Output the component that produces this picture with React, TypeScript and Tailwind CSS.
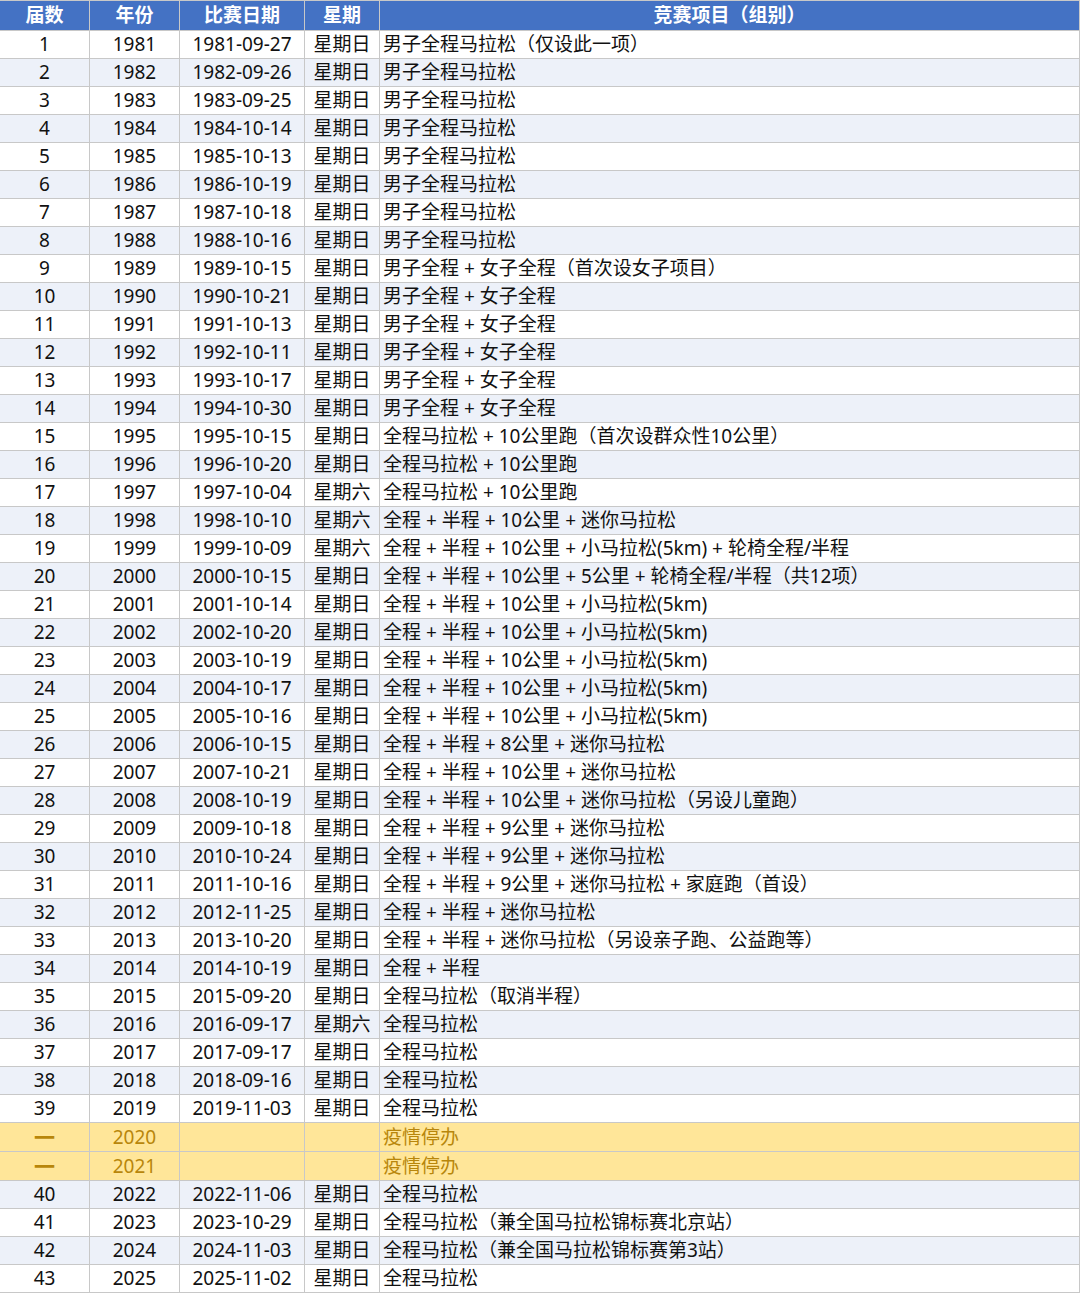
import * as React from 'react';

type Row = {
  no: string;
  year: string;
  date: string;
  week: string;
  event: string;
  halted?: boolean;
};

const rows: Row[] = [
  { no: '1', year: '1981', date: '1981-09-27', week: '星期日', event: '男子全程马拉松（仅设此一项）' },
  { no: '2', year: '1982', date: '1982-09-26', week: '星期日', event: '男子全程马拉松' },
  { no: '3', year: '1983', date: '1983-09-25', week: '星期日', event: '男子全程马拉松' },
  { no: '4', year: '1984', date: '1984-10-14', week: '星期日', event: '男子全程马拉松' },
  { no: '5', year: '1985', date: '1985-10-13', week: '星期日', event: '男子全程马拉松' },
  { no: '6', year: '1986', date: '1986-10-19', week: '星期日', event: '男子全程马拉松' },
  { no: '7', year: '1987', date: '1987-10-18', week: '星期日', event: '男子全程马拉松' },
  { no: '8', year: '1988', date: '1988-10-16', week: '星期日', event: '男子全程马拉松' },
  { no: '9', year: '1989', date: '1989-10-15', week: '星期日', event: '男子全程 + 女子全程（首次设女子项目）' },
  { no: '10', year: '1990', date: '1990-10-21', week: '星期日', event: '男子全程 + 女子全程' },
  { no: '11', year: '1991', date: '1991-10-13', week: '星期日', event: '男子全程 + 女子全程' },
  { no: '12', year: '1992', date: '1992-10-11', week: '星期日', event: '男子全程 + 女子全程' },
  { no: '13', year: '1993', date: '1993-10-17', week: '星期日', event: '男子全程 + 女子全程' },
  { no: '14', year: '1994', date: '1994-10-30', week: '星期日', event: '男子全程 + 女子全程' },
  { no: '15', year: '1995', date: '1995-10-15', week: '星期日', event: '全程马拉松 + 10公里跑（首次设群众性10公里）' },
  { no: '16', year: '1996', date: '1996-10-20', week: '星期日', event: '全程马拉松 + 10公里跑' },
  { no: '17', year: '1997', date: '1997-10-04', week: '星期六', event: '全程马拉松 + 10公里跑' },
  { no: '18', year: '1998', date: '1998-10-10', week: '星期六', event: '全程 + 半程 + 10公里 + 迷你马拉松' },
  { no: '19', year: '1999', date: '1999-10-09', week: '星期六', event: '全程 + 半程 + 10公里 + 小马拉松(5km) + 轮椅全程/半程' },
  { no: '20', year: '2000', date: '2000-10-15', week: '星期日', event: '全程 + 半程 + 10公里 + 5公里 + 轮椅全程/半程（共12项）' },
  { no: '21', year: '2001', date: '2001-10-14', week: '星期日', event: '全程 + 半程 + 10公里 + 小马拉松(5km)' },
  { no: '22', year: '2002', date: '2002-10-20', week: '星期日', event: '全程 + 半程 + 10公里 + 小马拉松(5km)' },
  { no: '23', year: '2003', date: '2003-10-19', week: '星期日', event: '全程 + 半程 + 10公里 + 小马拉松(5km)' },
  { no: '24', year: '2004', date: '2004-10-17', week: '星期日', event: '全程 + 半程 + 10公里 + 小马拉松(5km)' },
  { no: '25', year: '2005', date: '2005-10-16', week: '星期日', event: '全程 + 半程 + 10公里 + 小马拉松(5km)' },
  { no: '26', year: '2006', date: '2006-10-15', week: '星期日', event: '全程 + 半程 + 8公里 + 迷你马拉松' },
  { no: '27', year: '2007', date: '2007-10-21', week: '星期日', event: '全程 + 半程 + 10公里 + 迷你马拉松' },
  { no: '28', year: '2008', date: '2008-10-19', week: '星期日', event: '全程 + 半程 + 10公里 + 迷你马拉松（另设儿童跑）' },
  { no: '29', year: '2009', date: '2009-10-18', week: '星期日', event: '全程 + 半程 + 9公里 + 迷你马拉松' },
  { no: '30', year: '2010', date: '2010-10-24', week: '星期日', event: '全程 + 半程 + 9公里 + 迷你马拉松' },
  { no: '31', year: '2011', date: '2011-10-16', week: '星期日', event: '全程 + 半程 + 9公里 + 迷你马拉松 + 家庭跑（首设）' },
  { no: '32', year: '2012', date: '2012-11-25', week: '星期日', event: '全程 + 半程 + 迷你马拉松' },
  { no: '33', year: '2013', date: '2013-10-20', week: '星期日', event: '全程 + 半程 + 迷你马拉松（另设亲子跑、公益跑等）' },
  { no: '34', year: '2014', date: '2014-10-19', week: '星期日', event: '全程 + 半程' },
  { no: '35', year: '2015', date: '2015-09-20', week: '星期日', event: '全程马拉松（取消半程）' },
  { no: '36', year: '2016', date: '2016-09-17', week: '星期六', event: '全程马拉松' },
  { no: '37', year: '2017', date: '2017-09-17', week: '星期日', event: '全程马拉松' },
  { no: '38', year: '2018', date: '2018-09-16', week: '星期日', event: '全程马拉松' },
  { no: '39', year: '2019', date: '2019-11-03', week: '星期日', event: '全程马拉松' },
  { no: '一', year: '2020', date: '', week: '', event: '疫情停办', halted: true },
  { no: '一', year: '2021', date: '', week: '', event: '疫情停办', halted: true },
  { no: '40', year: '2022', date: '2022-11-06', week: '星期日', event: '全程马拉松' },
  { no: '41', year: '2023', date: '2023-10-29', week: '星期日', event: '全程马拉松（兼全国马拉松锦标赛北京站）' },
  { no: '42', year: '2024', date: '2024-11-03', week: '星期日', event: '全程马拉松（兼全国马拉松锦标赛第3站）' },
  { no: '43', year: '2025', date: '2025-11-02', week: '星期日', event: '全程马拉松' },
];

const cols = 'grid grid-cols-[90px_90px_125px_75px_1fr]';

export default function App() {
  return (
    <div className="w-[1080px] bg-white font-['Noto_Sans','Noto_Sans_CJK_SC',sans-serif] text-[19px] leading-none border-t border-r border-[#c8c8c8]">
      {/* header */}
      <div className={`${cols} h-[30px] bg-[#4472c4] text-white font-bold border-b border-[#c8c8c8]`}>
        {['届数', '年份', '比赛日期', '星期', '竞赛项目（组别）'].map((h, i) => (
          <div
            key={h}
            className={`flex items-center justify-center ${i < 4 ? 'border-r border-[#c8c8c8]' : ''}`}
          >
            {h}
          </div>
        ))}
      </div>

      {rows.map((r, idx) => {
        const bg = r.halted
          ? 'bg-[#ffe699] text-[#b8860b] h-[29px]'
          : idx % 2 === 1
            ? 'bg-[#edf1f9] text-[#111111] h-[28px]'
            : 'bg-white text-[#111111] h-[28px]';
        return (
          <div key={r.year} className={`${cols} ${bg} border-b border-[#c8c8c8]`}>
            <div
              className={`flex items-center justify-center border-r border-[#c8c8c8] ${r.halted ? 'font-bold text-[21px]' : ''}`}
            >
              {r.no}
            </div>
            <div className="flex items-center justify-center border-r border-[#c8c8c8]">{r.year}</div>
            <div className="flex items-center justify-center border-r border-[#c8c8c8]">{r.date}</div>
            <div className="flex items-center justify-center border-r border-[#c8c8c8]">{r.week}</div>
            <div className="flex items-center pl-[3px] whitespace-nowrap">{r.event}</div>
          </div>
        );
      })}
    </div>
  );
}
